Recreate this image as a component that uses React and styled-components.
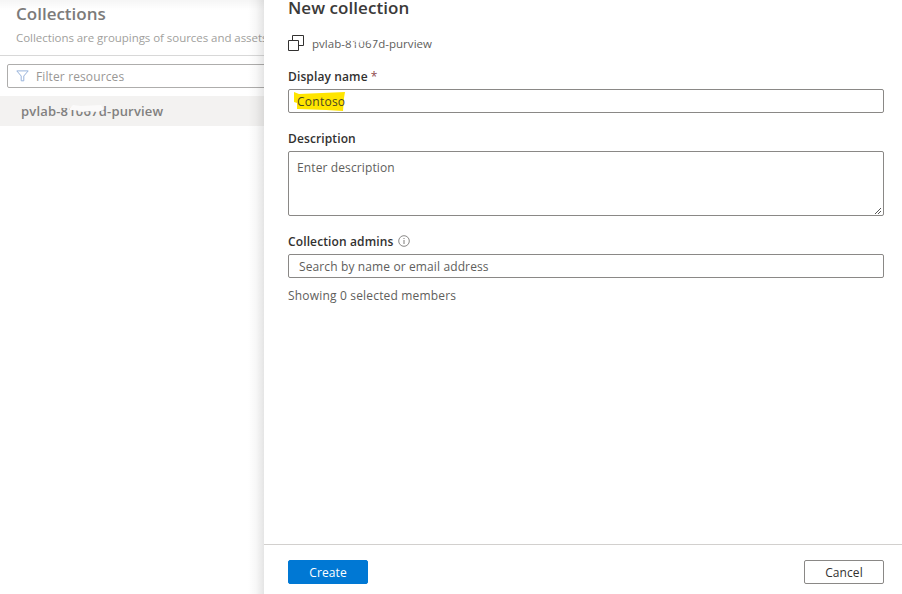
import React from "react";
import styled, { createGlobalStyle } from "styled-components";

const GlobalStyle = createGlobalStyle`
  * { box-sizing: border-box; }
  body { margin: 0; background: #fff; overflow: hidden; font-family: "Open Sans", "Noto Sans", sans-serif; }
`;

const Page = styled.div`
  display: flex;
  width: 902px;
  height: 594px;
  overflow: hidden;
  background: #fff;
`;

const Sidebar = styled.aside`
  flex: 0 0 264px;
  position: relative;
  overflow: hidden;
  white-space: nowrap;

  &::before {
    content: "";
    position: absolute;
    inset: 0 0 auto;
    height: 10px;
    background: linear-gradient(rgba(0, 0, 0, 0.04), transparent);
  }
  &::after {
    content: "";
    position: absolute;
    inset: 0 0 0 auto;
    width: 16px;
    background: linear-gradient(to right, transparent, rgba(0, 0, 0, 0.03) 50%, rgba(0, 0, 0, 0.1));
  }
`;

const SideHeader = styled.header`
  display: flex;
  flex-direction: column;
  gap: 3px;
  height: 56px;
  padding: 2px 0 0 16px;
  border-bottom: 1px solid #d8d8d8;
`;

const Text = styled.div`
  font-size: ${(p) => p.$size || 12}px;
  font-weight: ${(p) => p.$weight || 400};
  line-height: ${(p) => p.$line || 19}px;
  letter-spacing: ${(p) => p.$track ?? 0.12}px;
  color: ${(p) => p.$color || "#605e5c"};
  white-space: nowrap;
`;

const FilterBox = styled.div`
  display: flex;
  align-items: center;
  gap: 7px;
  width: 290px;
  height: 24px;
  margin: 8px 0 0 7px;
  padding-left: 8px;
  border: 1px solid #aeadac;
  border-radius: 2px;
`;

const TreeItem = styled.div`
  display: flex;
  align-items: center;
  height: 30px;
  margin-top: 8px;
  padding-left: 21px;
  background: #f3f2f1;
`;

const Redacted = styled.div`
  position: relative;
`;

const Stroke = styled.svg`
  position: absolute;
  left: ${(p) => p.$x}px;
  top: ${(p) => p.$y}px;
  overflow: visible;
`;

const Panel = styled.main`
  flex: 1;
  display: flex;
  flex-direction: column;
  background: #fff;
`;

const Form = styled.div`
  flex: 1;
  padding: 0 18px 0 24px;
`;

const PanelTitle = styled(Text)`
  margin-top: -4px;
`;

const Breadcrumb = styled.div`
  display: flex;
  align-items: flex-start;
  gap: 8px;
  height: 20px;
  margin-top: 14px;

  > svg { margin-top: 1px; }
`;

const Label = styled.div`
  display: flex;
  align-items: center;
  height: 19px;
  margin: ${(p) => p.$top}px 0 3px;
`;

const Required = styled.span`
  color: #8e4a4e;
  font-weight: 400;
  margin-left: 3px;
`;

const Field = styled.div`
  position: relative;
  display: flex;
  align-items: ${(p) => (p.$tall ? "flex-start" : "center")};
  height: ${(p) => (p.$tall ? 65 : 24)}px;
  padding: ${(p) => (p.$tall ? "6px 0 0" : "0")};
  padding-left: ${(p) => p.$indent || 8}px;
  border: 1px solid #8a8886;
  border-radius: 2px;
`;

const Marked = styled(Text)`
  position: relative;
`;

const Grip = styled.svg`
  position: absolute;
  right: 1px;
  bottom: 0;
`;

const InfoIcon = styled.svg`
  margin: -1px 0 0 5px;
`;

const Members = styled(Text)`
  margin-top: 8px;
`;

const Footer = styled.footer`
  display: flex;
  justify-content: space-between;
  height: 50px;
  padding: 15px 18px 0 24px;
  border-top: 1px solid #d2d0ce;
`;

const Button = styled.button`
  width: 80px;
  height: 24px;
  padding: 1px 0 0;
  border: 1px solid ${(p) => (p.$primary ? "#0078d4" : "#8a8886")};
  border-radius: 2px;
  background: ${(p) => (p.$primary ? "#0078d4" : "#fff")};
  color: ${(p) => (p.$primary ? "#fff" : "#323130")};
  font: 400 12px/21px "Open Sans", "Noto Sans", sans-serif;
  letter-spacing: 0.1px;
`;

export default function App() {
  return (
    <>
      <GlobalStyle />
      <Page>
        <Sidebar>
          <SideHeader>
            <Text $size={17} $weight={600} $line={24} $track={0} $color="#7c7b7a">Collections</Text>
            <Text $size={11.5} $line={18} $track={-0.05} $color="#a19f9d">
              Collections are groupings of sources and assets
            </Text>
          </SideHeader>
          <FilterBox>
            <svg width="13" height="12" viewBox="0 0 13 12" fill="none" stroke="#98b3db">
              <path d="M.8.9h11.4L7.8 6v4.8H5.2V6Z" />
            </svg>
            <Text $color="#999795">Filter resources</Text>
          </FilterBox>
          <TreeItem>
            <Redacted>
              <Text $size={13} $weight={600} $track={0.19} $color="#81807f">pvlab-81067d-purview</Text>
              <Stroke $x={40} $y={2} width="44" height="10">
                <path d="M8 5 12 1 20 2 40 1 43 6 36 8 30 7 21 8 14 6 9 6Z" fill="#fbfafa" />
                <path d="M0 2 9 1 8 4 1 4Z" fill="#f3f2f1" />
              </Stroke>
            </Redacted>
          </TreeItem>
        </Sidebar>
        <Panel>
          <Form>
            <PanelTitle $size={17} $weight={600} $line={24} $track={0.05} $color="#3b3a39">New collection</PanelTitle>
            <Breadcrumb>
              <svg width="16" height="16" viewBox="0 0 16 16" fill="none" stroke="#323130">
                <path d="M4.5 5.5v-5h11v10h-5M.5 5.5h10v10H.5Z" />
              </svg>
              <Redacted>
                <Text $size={11.5} $track={0.04}>pvlab-81067d-purview</Text>
                <Stroke $x={32} $y={3} width="40" height="10">
                  <path d="M1 2 12 1 22 2 30 1 29 5 22 4 14 6 9 4 2 4Z" fill="#fff" fillOpacity=".85" />
                  <path d="M7 8 15 7 22 9" stroke="#fff" strokeOpacity=".45" fill="none" />
                </Stroke>
              </Redacted>
            </Breadcrumb>
            <Label $top={13}>
              <Text $weight={600} $color="#323130">Display name<Required>*</Required></Text>
            </Label>
            <Field>
              <Stroke $x={5} $y={2} width="52" height="20">
                <path d="M0 0 5 2 51 0 50 6 49 19 32 18 3 17 3 11 0 10Z" fill="#ffe500" />
              </Stroke>
              <Marked $track={0.25} $color="#4b4620">Contoso</Marked>
            </Field>
            <Label $top={16}>
              <Text $weight={600} $color="#323130">Description</Text>
            </Label>
            <Field $tall>
              <Text>Enter description</Text>
              <Grip width="8" height="8" viewBox="0 0 8 8" stroke="#555" shapeRendering="crispEdges">
                <path d="M1 7 7 1M4 7 7 4" />
              </Grip>
            </Field>
            <Label $top={16}>
              <Text $weight={600} $color="#323130">Collection admins</Text>
              <InfoIcon width="12" height="12" viewBox="0 0 12 12" fill="none" stroke="#7d7b79">
                <circle cx="6" cy="6" r="5.3" strokeWidth=".9" />
                <path d="M6 5v4M6 3v1" />
              </InfoIcon>
            </Label>
            <Field $indent={10}>
              <Text>Search by name or email address</Text>
            </Field>
            <Members $track={0.18}>Showing 0 selected members</Members>
          </Form>
          <Footer>
            <Button $primary>Create</Button>
            <Button>Cancel</Button>
          </Footer>
        </Panel>
      </Page>
    </>
  );
}
